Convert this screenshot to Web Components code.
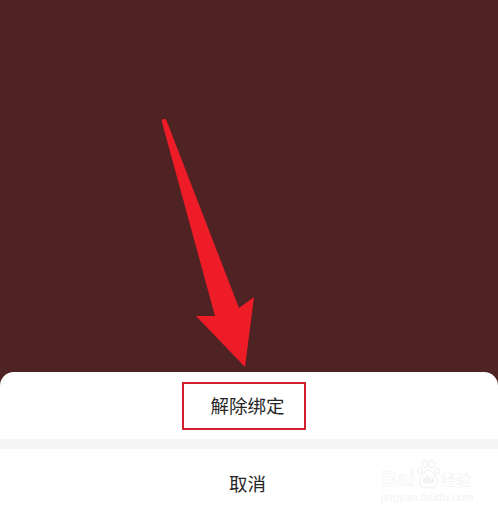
<!DOCTYPE html>
<html lang="zh">
<head>
<meta charset="utf-8">
<title>解除绑定</title>
<style>
  html, body { margin: 0; height: 100%; }
  body { font-family: "Liberation Sans", "Noto Sans CJK SC", sans-serif; overflow: hidden; }
</style>
</head>
<body>
<unbind-screen>
  <sheet-action outlined>解除绑定</sheet-action>
  <sheet-action slot="cancel">取消</sheet-action>
</unbind-screen>

<script>
const actionTemplate = document.createElement("template");
actionTemplate.innerHTML = `
  <style>
    :host {
      display: flex;
      justify-content: center;
      align-items: center;
      font-size: 18.5px;
      color: #262626;
    }
    .label {
      box-sizing: border-box;
      width: 124px;
      height: 48px;
      display: flex;
      justify-content: center;
      align-items: center;
      border: 2px solid transparent;
      padding: 0 3px 2px 0;
    }
    :host([outlined]) .label {
      border-color: #d2202f;
      margin-right: 10px;
      padding: 0 0 2px 7px;
    }
  </style>
  <div class="label"><slot></slot></div>
`;

customElements.define(
  "sheet-action",
  class extends HTMLElement {
    constructor() {
      super()
        .attachShadow({ mode: "open" })
        .appendChild(actionTemplate.content.cloneNode(true));
    }
  }
);

const watermarkTemplate = document.createElement("template");
watermarkTemplate.innerHTML = `
  <style>
    :host {
      position: absolute;
      left: 381px;
      top: 459px;
      width: 92px;
      display: block;
    }
    .top { display: flex; align-items: flex-end; height: 31px; }
    .word {
      font: bold 22px/22px "Liberation Sans", sans-serif;
      color: #fefefe;
      -webkit-text-stroke: 0.5px #f0f0f0;
    }
    svg { display: block; width: 24px; height: 31px; flex: none; margin-left: 1px; }
    .cn {
      font: 15.5px/20px "Noto Sans CJK SC", sans-serif;
      color: #f4f4f4;
      margin-bottom: 1px;
    }
    .url {
      font: 11.5px/13px "Liberation Sans", sans-serif;
      color: #f3f3f3;
      white-space: nowrap;
      margin-top: 1px;
    }
  </style>
  <div class="top">
    <span class="word">Bai</span>
    <svg viewBox="0 0 24 31" fill="#fefefe" stroke="#efefef" stroke-width="1">
      <ellipse cx="4" cy="12" rx="2.400" ry="3.200"/>
      <ellipse cx="9" cy="5" rx="2.800" ry="3.800"/>
      <ellipse cx="16" cy="5" rx="2.800" ry="3.800"/>
      <ellipse cx="21" cy="12" rx="2.400" ry="3.200"/>
      <path d="M12.500 11C9 11 8 15 5 18C2 22 4 29 9 29C11 29 11.500 28 12.500 28C13.500 28 14.500 29 16.500 29C21 29 23 22 20 18C17 15 16 11 12.500 11Z"/>
      <text x="12.500" y="24" text-anchor="middle" font-family="Liberation Sans" font-weight="bold" font-size="9" fill="#ececec" stroke="none">du</text>
    </svg>
    <span class="cn">经验</span>
  </div>
  <div class="url">jingyan.baidu.com</div>
`;

customElements.define(
  "baidu-watermark",
  class extends HTMLElement {
    constructor() {
      super()
        .attachShadow({ mode: "open" })
        .appendChild(watermarkTemplate.content.cloneNode(true));
    }
  }
);

const screenTemplate = document.createElement("template");
screenTemplate.innerHTML = `
  <style>
    :host {
      display: flex;
      flex-direction: column;
      position: relative;
      width: 498px;
      height: 514px;
      background: #4f2224;
      overflow: hidden;
    }
    .backdrop { flex: 1; }
    .sheet {
      background: #fff;
      border-radius: 14px 14px 0 0;
      padding-top: 10px;
    }
    .gap { height: 10px; margin-top: 9px; background: #f5f5f5; }
    .cancel { padding-top: 11px; box-sizing: border-box; height: 65px; }
    .arrow {
      position: absolute;
      left: 0;
      top: 0;
      width: 498px;
      height: 514px;
      pointer-events: none;
    }
  </style>
  <div class="backdrop"></div>
  <div class="sheet">
    <slot></slot>
    <div class="gap"></div>
    <div class="cancel"><slot name="cancel"></slot></div>
  </div>
  <svg class="arrow" viewBox="0 0 498 514">
    <path fill="#ee1c27" d="M161.800 121.500C161.800 118.800 165.600 118 166.500 120.500L239 308L254 297L245 367L196 316L215 316Z"/>
  </svg>
  <baidu-watermark></baidu-watermark>
`;

customElements.define(
  "unbind-screen",
  class extends HTMLElement {
    constructor() {
      super()
        .attachShadow({ mode: "open" })
        .appendChild(screenTemplate.content.cloneNode(true));
    }
  }
);
</script>
</body>
</html>
